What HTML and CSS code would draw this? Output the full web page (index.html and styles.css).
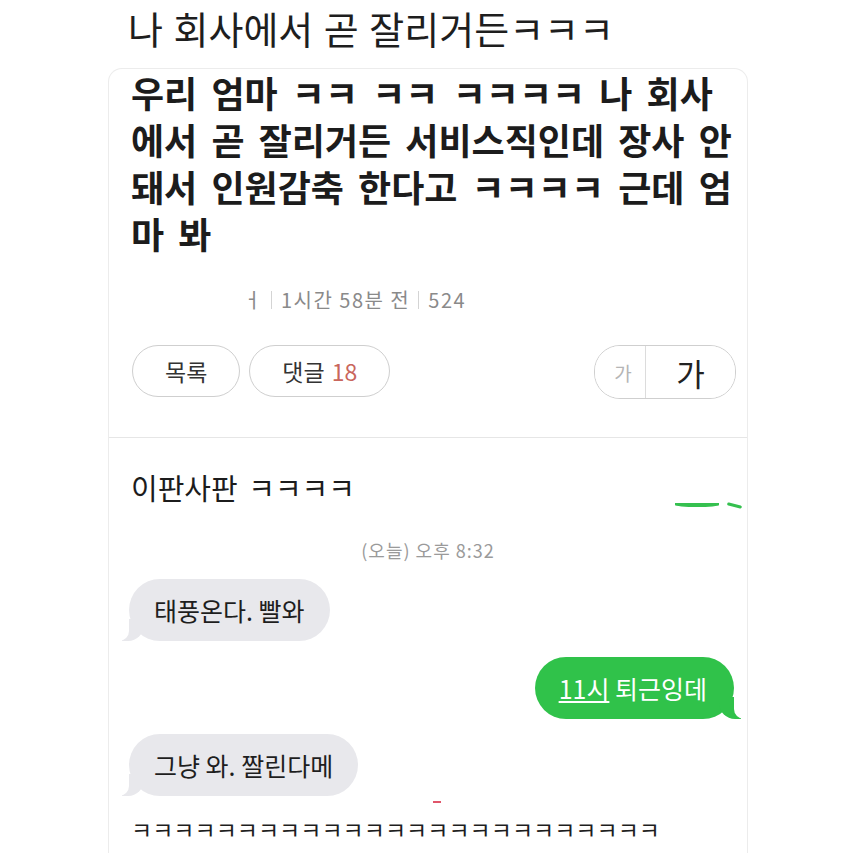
FILE: index.html
```html
<!DOCTYPE html>
<html>
<head>
<meta charset="UTF-8">
<title>나 회사에서 곧 잘리거든ㅋㅋㅋ</title>
<link rel="stylesheet" href="styles.css">
</head>
<body>
  <div class="page">
    <h1 class="title">나 회사에서 곧 잘리거든ㅋㅋㅋ</h1>

    <div class="card">
      <div class="post-body">
        우리 엄마 ㅋㅋ ㅋㅋ ㅋㅋㅋㅋ 나 회사<br>
        에서 곧 잘리거든 서비스직인데 장사 안<br>
        돼서 인원감축 한다고 ㅋㅋㅋㅋ 근데 엄<br>
        마 봐
      </div>

      <div class="meta">
        <span>ㅓ</span><span class="sep"></span><span>1시간 58분 전</span><span class="sep"></span><span>524</span>
      </div>

      <div class="actions">
        <div class="left-buttons">
          <button class="pill">목록</button>
          <button class="pill">댓글 <span class="count">18</span></button>
        </div>
        <div class="font-toggle">
          <button class="small">가</button>
          <button class="big">가</button>
        </div>
      </div>

      <div class="chat">
        <div class="chat-title">이판사판 ㅋㅋㅋㅋ</div>
        <div class="cut-bubble"><span class="long"></span><span class="short"></span></div>
        <div class="chat-time">(오늘) 오후 8:32</div>

        <div class="row in first"><div class="bubble">태풍온다. 빨와</div></div>
        <div class="row out"><div class="bubble"><u>11시</u> 퇴근잉데</div></div>
        <div class="row in"><div class="bubble">그냥 와. 짤린다메</div></div>
        <div class="red-mark"></div>

        <div class="laugh">ㅋㅋㅋㅋㅋㅋㅋㅋㅋㅋㅋㅋㅋㅋㅋㅋㅋㅋㅋㅋㅋㅋㅋㅋㅋ</div>
      </div>
    </div>
  </div>
</body>
</html>
```

FILE: styles.css
```css
body {
  margin: 0;
  background: #fff;
  color: #222;
  font-family: "Noto Sans CJK KR", "Noto Sans", sans-serif;
}

.page {
  margin-left: 108px;
  width: 640px;
}

.title {
  margin: 0;
  padding: 0 0 0 20px;
  font-size: 38px;
  font-weight: 400;
  line-height: 56px;
  word-spacing: 2px;
  color: #1e1e1e;
}

.card {
  margin-top: 12px;
  border: 1px solid #ececec;
  border-bottom: none;
  border-radius: 14px 14px 0 0;
  height: 800px;
}

.post-body {
  padding: 0 6px 0 22px;
  font-size: 36px;
  font-weight: 700;
  line-height: 47px;
  word-spacing: 6px;
  color: #1c1c1c;
}

/* 작성자 / 시간 / 조회수 */
.meta {
  margin-top: 31px;
  padding-left: 134px;
  font-size: 20px;
  line-height: 24px;
  letter-spacing: 1.5px;
  color: #8a8a8a;
  display: flex;
  align-items: center;
}

.meta .sep {
  display: inline-block;
  width: 1px;
  height: 18px;
  background: #d4d4d4;
  margin: 0 9px 0 8px;
}

.actions {
  margin-top: 33px;
  padding: 0 11px 0 23px;
  height: 92px;
  display: flex;
  justify-content: space-between;
  align-items: flex-start;
  border-bottom: 1px solid #e6e6e6;
}

.left-buttons {
  display: flex;
  gap: 9px;
}

.pill {
  height: 52px;
  padding: 0 32px;
  border: 1px solid #cfcfcf;
  border-radius: 26px;
  background: #fff;
  font-family: inherit;
  font-size: 23px;
  color: #333;
}

.pill .count {
  color: #c9665c;
  margin-left: 2px;
}

.font-toggle {
  display: flex;
  height: 52px;
  border: 1px solid #cfcfcf;
  border-radius: 26px;
  overflow: hidden;
}

.font-toggle button {
  background: #fff;
  border: none;
  font-family: inherit;
  padding: 0;
}

.font-toggle .small {
  width: 51px;
  padding-left: 6px;
  font-size: 19px;
  color: #b5b5b5;
  border-right: 1px solid #dcdcdc;
}

.font-toggle .big {
  width: 89px;
  font-size: 31px;
  color: #222;
}

.chat {
  padding: 31px 0 0 22px;
}

.chat-title {
  font-size: 29px;
  line-height: 36px;
  word-spacing: 4px;
  color: #1c1c1c;
}

/* 위쪽에서 잘린 초록 말풍선 */
.cut-bubble {
  display: flex;
  justify-content: flex-end;
  align-items: center;
  gap: 8px;
  height: 4px;
  margin-top: -2px;
  padding-right: 5px;
}

.cut-bubble .long {
  width: 44px;
  height: 4px;
  background: #35c04f;
  border-radius: 0 0 50% 50%;
}

.cut-bubble .short {
  width: 15px;
  height: 3px;
  background: #35c04f;
  border-radius: 2px;
  transform: rotate(14deg);
}

.chat-time {
  margin-top: 32px;
  text-align: center;
  padding-right: 22px;
  font-size: 18px;
  line-height: 22px;
  letter-spacing: 1px;
  color: #9a9a9a;
}

.row {
  display: flex;
  margin-top: 15px;
}

.row.first {
  margin-top: 18px;
}

.row.out {
  margin-top: 16px;
  justify-content: flex-end;
  padding-right: 13px;
}

.bubble {
  position: relative;
  font-size: 25px;
  line-height: 62px;
  padding: 0 25px 0 25px;
  border-radius: 31px;
  background: #e8e8ec;
  color: #1e1e1e;
}

.row.in .bubble {
  margin-left: -2px;
}

.bubble::before,
.bubble::after {
  content: "";
  position: absolute;
  bottom: 0;
  height: 22px;
}

.row.in .bubble::before {
  left: -7px;
  width: 22px;
  background: #e8e8ec;
  border-bottom-right-radius: 16px;
}

.row.in .bubble::after {
  left: -12px;
  width: 12px;
  background: #fff;
  border-bottom-right-radius: 10px;
}

.row.out .bubble {
  background: #30c24a;
  color: #fff;
  padding: 0 27px 0 24px;
}

.row.out .bubble::before {
  right: -7px;
  width: 22px;
  background: #30c24a;
  border-bottom-left-radius: 16px;
}

.row.out .bubble::after {
  right: -12px;
  width: 12px;
  background: #fff;
  border-bottom-left-radius: 10px;
}

.red-mark {
  width: 8px;
  height: 2px;
  margin: 5px 0 0 302px;
  background: #e0556a;
}

.laugh {
  margin-top: 11px;
  font-size: 23px;
  line-height: 30px;
  color: #1e1e1e;
}
```
